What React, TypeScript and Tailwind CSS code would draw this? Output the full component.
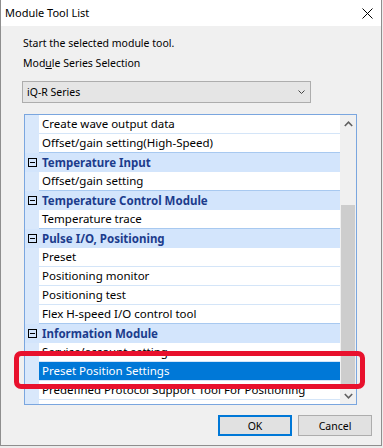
import React from "react";

type Row = { text: string; header?: boolean; selected?: boolean };

const rows: Row[] = [
  { text: "Create wave output data" },
  { text: "Offset/gain setting(High-Speed)" },
  { text: "Temperature Input", header: true },
  { text: "Offset/gain setting" },
  { text: "Temperature Control Module", header: true },
  { text: "Temperature trace" },
  { text: "Pulse I/O, Positioning", header: true },
  { text: "Preset" },
  { text: "Positioning monitor" },
  { text: "Positioning test" },
  { text: "Flex H-speed I/O control tool" },
  { text: "Information Module", header: true },
  { text: "Service/account setting" },
  { text: "Preset Position Settings", selected: true },
  { text: "Predefined Protocol Support Tool For Positioning" },
  { text: "" },
];

function MinusBox() {
  return (
    <svg width="9" height="9" viewBox="0 0 9 9">
      <rect x="0.5" y="0.5" width="8" height="8" fill="none" stroke="#000" />
      <line x1="2" y1="4.5" x2="7" y2="4.5" stroke="#000" />
    </svg>
  );
}

function ListRow({ row, nextIsHeader }: { row: Row; nextIsHeader: boolean }) {
  if (row.header) {
    return (
      <div className="flex h-[19px] shrink-0 bg-[#d3e5fc]">
        <div className="flex w-[14px] shrink-0 items-center justify-end pr-[2px]">
          <MinusBox />
        </div>
        <div className="flex flex-1 items-center pl-[3px] font-bold text-[#1c3c8c]">{row.text}</div>
      </div>
    );
  }
  return (
    <div className="flex h-[19px] shrink-0">
      <div className="w-[14px] shrink-0 bg-[#d9e8fb]" />
      <div
        className={
          "flex flex-1 items-center whitespace-nowrap border-b pl-[3px] " +
          (row.selected ? "bg-[#0078d7] text-white " : "bg-white text-black ") +
          (nextIsHeader ? "border-[#a8c9f0]" : "border-[#d4e5f8]")
        }
      >
        {row.text}
      </div>
    </div>
  );
}

export default function App() {
  return (
    <div className="relative h-[448px] w-[383px] bg-[#ececec] font-['Noto_Sans','Liberation_Sans',sans-serif] text-[10.5px] leading-[16px] text-black">
      <div className="flex h-[446px] w-[382px] flex-col border-x border-b border-[#8e8e8e] bg-[#f0f0f0]">
        <div className="flex h-[26px] shrink-0 items-center justify-between bg-white pl-[4px] pr-[8px]">
          <span className="text-[11px]">Module Tool List</span>
          <svg width="11" height="11" viewBox="0 0 11 11" className="mt-[1px]">
            <line x1="0.5" y1="0.5" x2="10.5" y2="10.5" stroke="#000" />
            <line x1="10.5" y1="0.5" x2="0.5" y2="10.5" stroke="#000" />
          </svg>
        </div>

        <div className="ml-[22px] mt-[9px]">Start the selected module tool.</div>
        <div className="ml-[22px] mt-[4px]">
          Mod<span className="underline">u</span>le Series Selection
        </div>

        <div className="ml-[21px] mt-[10px] flex h-[22px] w-[289px] items-center justify-between border border-[#adadad] bg-[#e5e5e5] pl-[4px] pr-[5px]">
          <span>iQ-R Series</span>
          <svg width="7" height="4" viewBox="0 0 7 4">
            <polyline points="0.5,0.5 3.5,3.5 6.5,0.5" fill="none" stroke="#444" />
          </svg>
        </div>

        <div className="ml-[23px] mt-[11px] flex h-[291px] w-[333px] border border-[#7aa6df] bg-white text-[11.5px]">
          <div className="flex flex-1 flex-col overflow-hidden">
            {rows.map((r, i) => (
              <ListRow key={i} row={r} nextIsHeader={!!rows[i + 1]?.header} />
            ))}
          </div>
          <div className="flex w-[16px] shrink-0 flex-col bg-[#f0f0f0]">
            <div className="flex h-[17px] items-center justify-center">
              <svg width="9" height="6" viewBox="0 0 9 6">
                <polyline points="0.8,5 4.5,1.2 8.2,5" fill="none" stroke="#606060" strokeWidth="1.6" />
              </svg>
            </div>
            <div className="flex-1">
              <div className="mx-px mt-[73px] h-[182px] bg-[#cdcdcd]" />
            </div>
            <div className="flex h-[17px] items-center justify-center">
              <svg width="9" height="6" viewBox="0 0 9 6">
                <polyline points="0.8,1 4.5,4.8 8.2,1" fill="none" stroke="#606060" strokeWidth="1.6" />
              </svg>
            </div>
          </div>
        </div>

        <div className="mt-[10px] flex justify-end gap-[6px] pr-[9px]">
          <button className="h-[21px] w-[74px] border-2 border-[#0078d7] bg-[#e1e1e1]">OK</button>
          <button className="h-[21px] w-[74px] border border-[#adadad] bg-[#e1e1e1]">Cancel</button>
        </div>
      </div>

      <div className="absolute left-[14px] top-[351px] h-[38px] w-[351px] rounded-[7px] border-[5px] border-[#e8112d]" />
    </div>
  );
}
